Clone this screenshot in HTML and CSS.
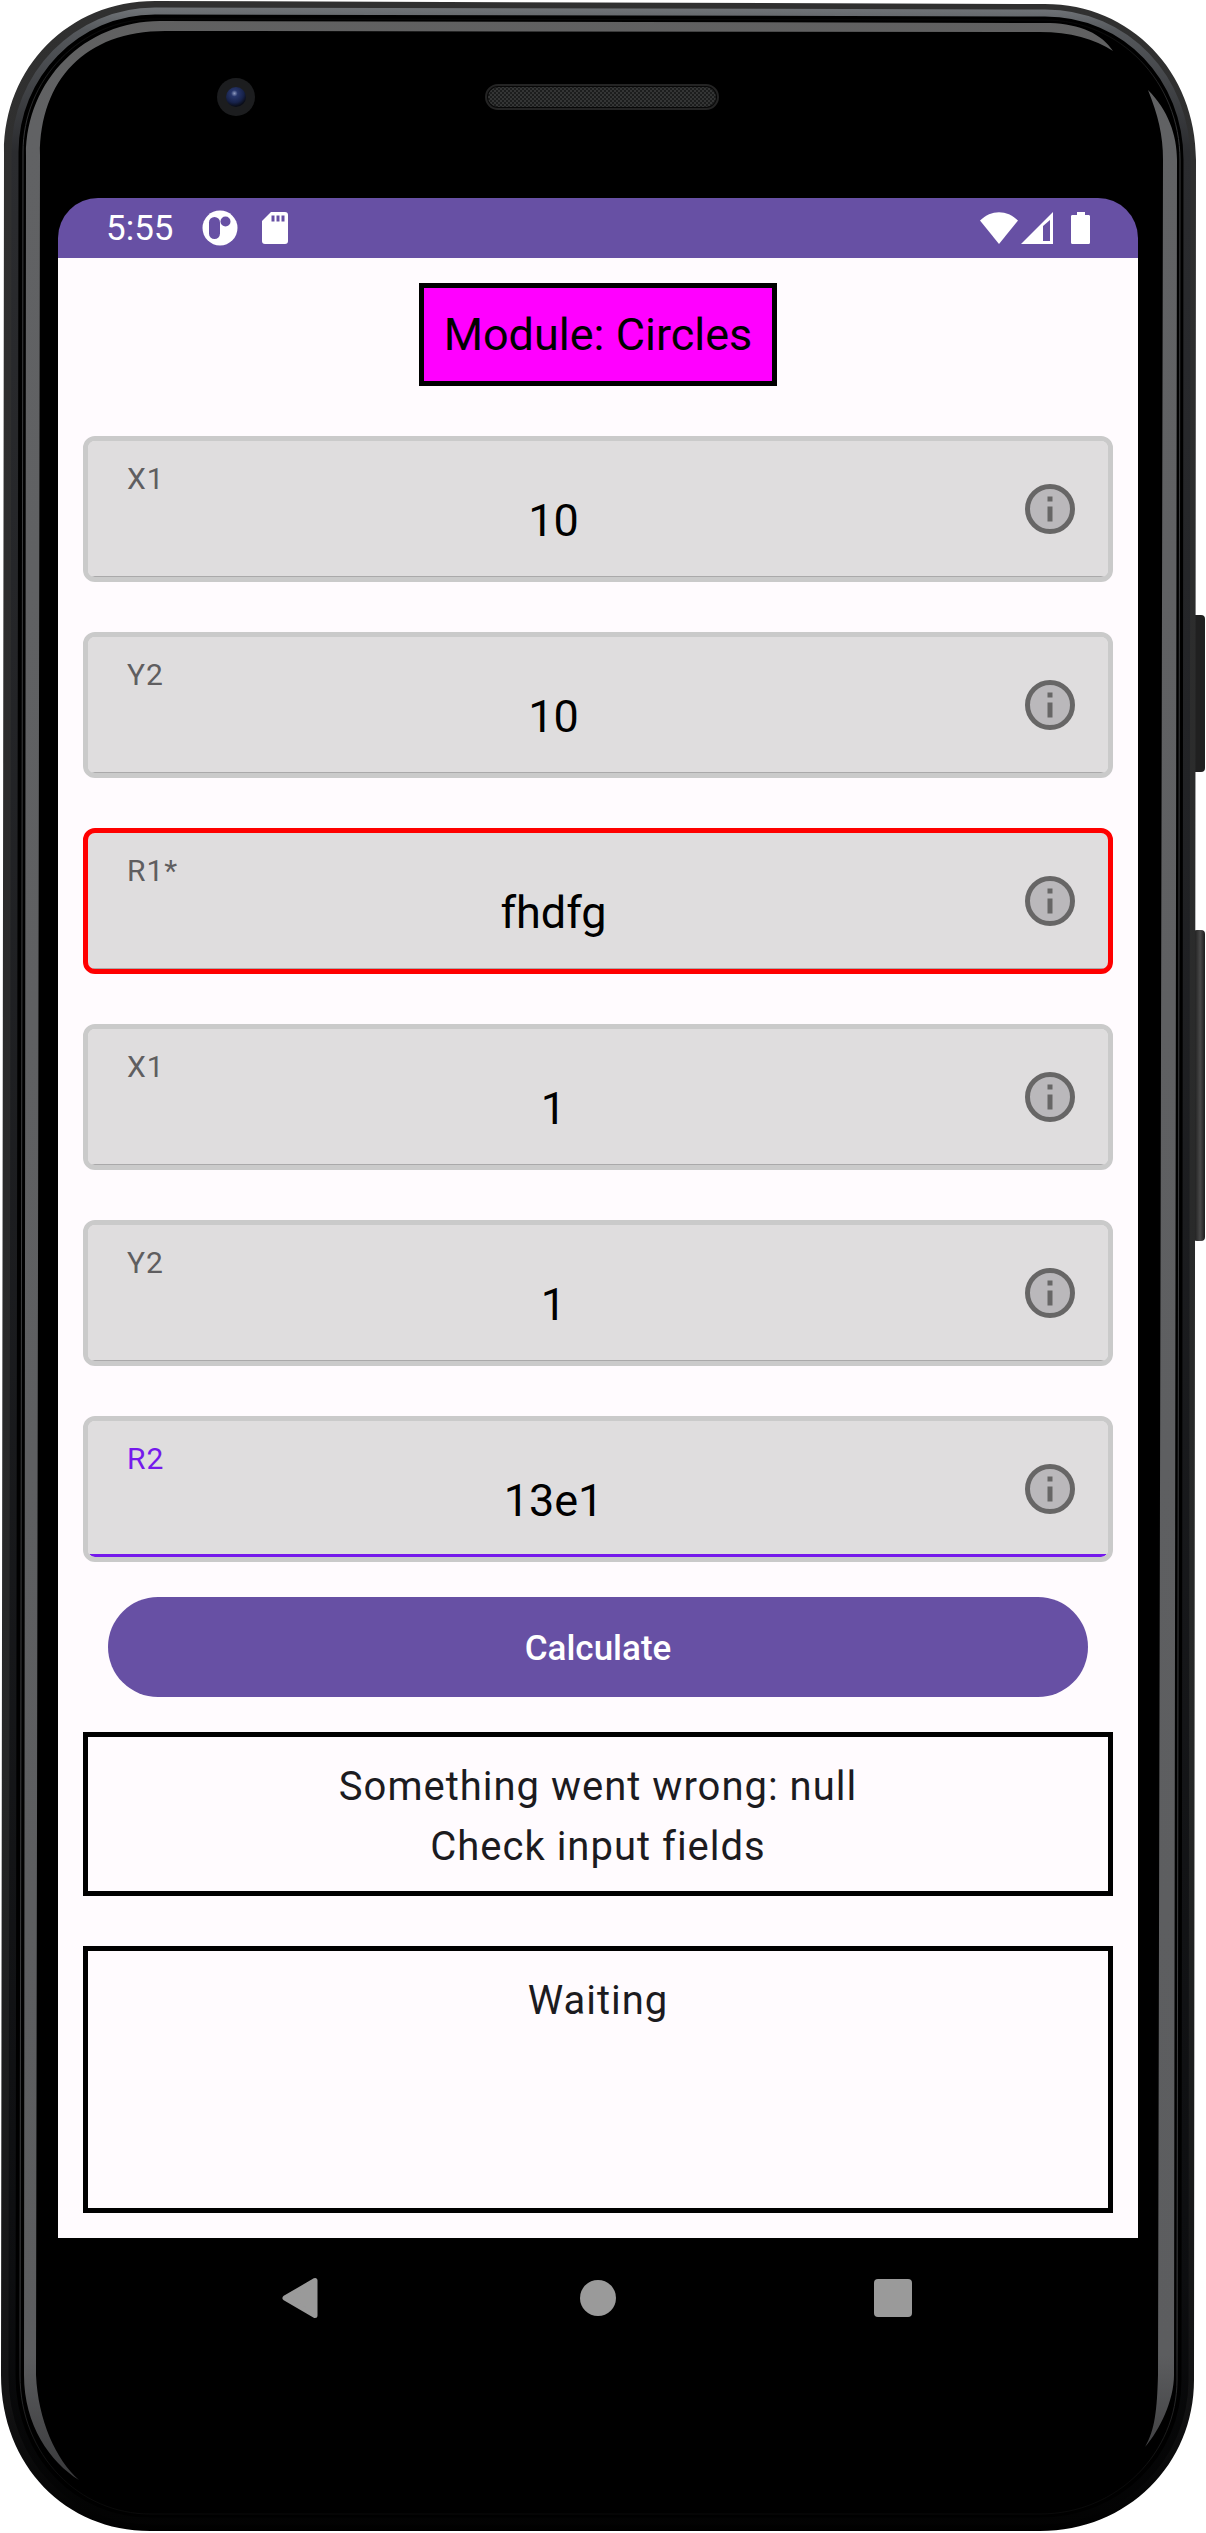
FILE: index.html
```html
<!DOCTYPE html>
<html lang="en">
<head>
<meta charset="utf-8">
<meta name="viewport" content="width=device-width, initial-scale=1">
<title>Module: Circles</title>
<link rel="stylesheet" href="styles.css">
</head>
<body>
<svg class="defs" aria-hidden="true">
  <symbol id="info" viewBox="0 0 50 50">
    <circle cx="25" cy="25" r="22.5" fill="#bab8bb" stroke="#676666" stroke-width="5"/>
    <path d="M22.5 12.5h5v5h-5zM22.5 22.5h5v15h-5z" fill="#676666"/>
  </symbol>
</svg>
<div class="phone">
  <svg class="frame" viewBox="0 0 1206 2533" preserveAspectRatio="none" aria-hidden="true">
    <defs>
      <linearGradient id="rim" x1="0" y1="0" x2="0" y2="1">
        <stop offset="0" stop-color="#303030"/><stop offset=".7" stop-color="#262727"/>
        <stop offset=".95" stop-color="#121213"/><stop offset="1" stop-color="#000"/>
      </linearGradient>
      <linearGradient id="metal" gradientUnits="userSpaceOnUse" x1="0" y1="0" x2="0" y2="2533">
        <stop offset="0" stop-color="#7a7e82"/><stop offset=".012" stop-color="#55585c"/>
        <stop offset=".06" stop-color="#2b2c2f"/><stop offset=".9" stop-color="#0d0e10"/>
        <stop offset="1" stop-color="#020202"/>
      </linearGradient>
      <linearGradient id="hair" gradientUnits="userSpaceOnUse" x1="0" y1="0" x2="0" y2="2533">
        <stop offset="0" stop-color="#000"/><stop offset=".06" stop-color="#3c3d3f"/>
        <stop offset=".92" stop-color="#3c3d3f"/><stop offset=".98" stop-color="#0a0a0a"/>
      </linearGradient>
      <linearGradient id="shine" gradientUnits="userSpaceOnUse" x1="0" y1="0" x2="0" y2="2533">
        <stop offset="0" stop-color="#606060"/><stop offset=".05" stop-color="#616264"/>
        <stop offset=".93" stop-color="#5c5d5f"/><stop offset="1" stop-color="#2a2a2c"/>
      </linearGradient>
      <linearGradient id="key" x1="0" y1="0" x2="1" y2="0">
        <stop offset="0" stop-color="#151515"/><stop offset=".6" stop-color="#484848"/><stop offset="1" stop-color="#1c1c1c"/>
      </linearGradient>
      <radialGradient id="lens" cx=".42" cy=".32" r=".65">
        <stop offset="0" stop-color="#8f9bc0"/><stop offset=".25" stop-color="#27366b"/>
        <stop offset=".7" stop-color="#17224a"/><stop offset="1" stop-color="#0a0d18"/>
      </radialGradient>
      <pattern id="mesh" width="4" height="4" patternUnits="userSpaceOnUse">
        <rect width="4" height="4" fill="#1c1d1d"/>
        <circle cx="1" cy="1" r="1" fill="#3b3c3c"/><circle cx="3" cy="3" r="1" fill="#3b3c3c"/>
      </pattern>
    </defs>
    <rect x="1190" y="615" width="15" height="157" rx="4" fill="#202020"/>
    <rect x="1193" y="930" width="12" height="311" rx="4" fill="url(#key)"/>
    <path fill="url(#rim)" d="M4 152C4 68 68 1 155 1L1045 4C1131 4 1196 72 1196 160L1194 2380C1194 2464 1128 2531 1040 2531L150 2531C66 2531 1 2466 1 2375Z"/>
    <path fill="#000" stroke="url(#metal)" stroke-width="7" d="M15 152C15 76 76 11 155 11L1045 13C1126 13 1187 78 1187 160L1185 2380C1185 2458 1122 2521 1040 2521L150 2521C74 2521 12 2460 12 2375Z"/>
    <path fill="#000" stroke="url(#hair)" stroke-width="1" d="M23 152C23 80 80 19 155 19L1045 20C1120 20 1180 82 1180 160L1177 2380C1177 2452 1118 2514 1040 2514L150 2514C80 2514 20 2456 20 2375Z"/>
    <path fill="url(#shine)" d="M79 2480C50 2462 24 2425 24 2375L26 155C26 80 85 21 160 21L1050 23C1080 24 1102 34 1113 51C1095 39 1070 32 1040 32L165 31C85 31 40 80 40 155L36 2375C38 2420 56 2460 79 2480Z"/>
    <path fill="url(#shine)" d="M1148 90C1168 110 1177 135 1177 160L1174 2375C1174 2400 1160 2430 1145 2447C1155 2430 1157 2410 1158 2375L1163 160C1163 135 1158 115 1148 90Z"/>
    <circle cx="236" cy="97" r="19" fill="#1c1d1f"/>
    <circle cx="236" cy="97" r="10" fill="url(#lens)"/>
    <rect x="486" y="85" width="232" height="24" rx="12" fill="#080808" stroke="#242424" stroke-width="2"/>
    <rect x="488" y="87" width="228" height="20" rx="10" fill="url(#mesh)"/>
  </svg>

  <div class="screen">
    <header class="status">
      <span class="time">5:55</span>
      <svg class="logo" viewBox="0 0 36 36" aria-hidden="true">
        <circle cx="18" cy="18" r="17.5" fill="#fff"/>
        <rect x="7" y="7" width="11" height="22" rx="5.5" fill="#6750a4"/>
        <circle cx="23.500" cy="11.500" r="5" fill="#6750a4"/>
      </svg>
      <svg class="card" viewBox="0 0 26 32" aria-hidden="true">
        <path fill="#fff" d="M9 0H23a3 3 0 0 1 3 3V29a3 3 0 0 1-3 3H3a3 3 0 0 1-3-3V9Z"/>
        <path fill="#6750a4" d="M9.500 3.500h3v6h-3zM14.500 3.500h3v6h-3zM19.500 3.500h3v6h-3z"/>
      </svg>
      <svg class="signals" viewBox="0 0 110 32" aria-hidden="true">
        <path fill="#fff" d="M0 8.500C11-2.600 27-2.600 38 8.500L19 32Z"/>
        <path fill="#fff" fill-rule="evenodd" d="M41 32L73 0V32ZM63 14V29H70V8Z"/>
        <path fill="#fff" d="M93 3h4V0h8v3h4a1.500 1.500 0 0 1 1 1.500V30.500a1.500 1.500 0 0 1-1.500 1.500h-16a1.500 1.500 0 0 1-1.500-1.500V4.500a1.500 1.500 0 0 1 1-1.500Z"/>
      </svg>
    </header>

    <main class="content">
      <h1 class="title">Module: Circles</h1>
      <form class="form">
        <div class="field">
          <div class="entry"><label class="label" for="x1">X1</label><input class="value" id="x1" type="text" value="10"></div>
          <button class="info" type="button" aria-label="About X1"><svg class="glyph"><use href="#info"/></svg></button>
        </div>
        <div class="field">
          <div class="entry"><label class="label" for="y1">Y2</label><input class="value" id="y1" type="text" value="10"></div>
          <button class="info" type="button" aria-label="About Y2"><svg class="glyph"><use href="#info"/></svg></button>
        </div>
        <div class="field field-error">
          <div class="entry"><label class="label" for="r1">R1*</label><input class="value" id="r1" type="text" value="fhdfg" aria-invalid="true" spellcheck="false"></div>
          <button class="info" type="button" aria-label="About R1"><svg class="glyph"><use href="#info"/></svg></button>
        </div>
        <div class="field">
          <div class="entry"><label class="label" for="x2">X1</label><input class="value" id="x2" type="text" value="1"></div>
          <button class="info" type="button" aria-label="About X1"><svg class="glyph"><use href="#info"/></svg></button>
        </div>
        <div class="field">
          <div class="entry"><label class="label" for="y2">Y2</label><input class="value" id="y2" type="text" value="1"></div>
          <button class="info" type="button" aria-label="About Y2"><svg class="glyph"><use href="#info"/></svg></button>
        </div>
        <div class="field field-active">
          <div class="entry"><label class="label" for="r2">R2</label><input class="value" id="r2" type="text" value="13e1" spellcheck="false"></div>
          <button class="info" type="button" aria-label="About R2"><svg class="glyph"><use href="#info"/></svg></button>
        </div>
        <button class="submit" type="submit">Calculate</button>
      </form>
      <p class="message">Something went wrong: null<br>Check input fields</p>
      <p class="message message-result">Waiting</p>
    </main>

    <nav class="nav" aria-label="System">
      <button class="key" type="button" aria-label="Back"><svg class="glyph" viewBox="0 0 50 50"><path fill="#9a9a9a" stroke="#9a9a9a" stroke-width="5" stroke-linejoin="round" d="M8 25L38 7.500V42.500Z"/></svg></button>
      <button class="key" type="button" aria-label="Home"><svg class="glyph" viewBox="0 0 50 50"><circle cx="25" cy="25" r="18" fill="#9a9a9a"/></svg></button>
      <button class="key" type="button" aria-label="Recents"><svg class="glyph" viewBox="0 0 50 50"><rect x="5" y="6" width="38" height="38" rx="4" fill="#9a9a9a"/></svg></button>
    </nav>
  </div>
</div>
</body>
</html>
```
FILE: styles.css
```css
* {
  box-sizing: border-box;
}

body {
  margin: 0;
  background: #fff;
  color: #1c1b1f;
  font-family: Roboto, "Liberation Sans", sans-serif;
}

button,
input {
  margin: 0;
  border: 0;
  padding: 0;
  background: none;
  color: inherit;
  font: inherit;
}

.defs {
  display: none;
}

.phone {
  position: relative;
  padding: 198px 68px 175px 58px;
}

.frame {
  position: absolute;
  inset: 0;
  width: 100%;
  height: 100%;
}

/* Screen */
.screen {
  position: relative;
  overflow: hidden;
  border-radius: 40px;
  background: #000;
}

.status {
  display: flex;
  align-items: center;
  height: 60px;
  padding: 0 48px;
  background: #6750a4;
  color: #fff;
}

.time {
  margin-right: 28px;
  padding-top: 2px;
  font-size: 35px;
  line-height: 58px;
}

.logo {
  width: 36px;
  height: 36px;
  margin-right: 24px;
}

.card {
  width: 26px;
  height: 32px;
}

.signals {
  width: 110px;
  height: 32px;
  margin-left: auto;
}

.content {
  display: flex;
  flex-direction: column;
  padding: 25px;
  background: #fffbfe;
}

.title {
  align-self: center;
  margin: 0 0 50px;
  border: 5px solid #000;
  padding: 20px;
  background: #f0f;
  color: #000;
  font-size: 45px;
  font-weight: 400;
  line-height: 53px;
}

/* Form */
.form {
  display: flex;
  flex-direction: column;
  gap: 50px;
}

.field {
  display: flex;
  align-items: center;
  gap: 45px;
  border: 5px solid #cacaca;
  border-radius: 12px;
  padding-right: 33px;
  padding-left: 39px;
  background: linear-gradient(#aaa9aa, #aaa9aa) bottom / 100% 1px no-repeat padding-box #dfddde;
}

.field-error {
  border-color: #f00;
}

.field-active {
  background: linear-gradient(#7519ec, #7519ec) bottom / 100% 3px no-repeat padding-box #dfddde;
}

.entry {
  display: flex;
  flex: 1;
  flex-direction: column;
  padding: 23px 0 30px;
}

.label {
  color: #5f5e60;
  font-size: 30px;
  letter-spacing: 1px;
  line-height: 30px;
}

.field-active .label {
  color: #7519ec;
}

.value {
  width: 100%;
  height: 53px;
  outline: 0;
  color: #000;
  font-size: 45px;
  line-height: 53px;
  text-align: center;
}

.info,
.key {
  width: 50px;
  height: 50px;
  cursor: pointer;
}

.glyph {
  display: block;
  width: 50px;
  height: 50px;
}

.submit {
  height: 100px;
  margin: -15px 25px 35px;
  border-radius: 50px;
  padding-top: 3px;
  background: #6750a4;
  color: #fff;
  font-size: 35px;
  font-weight: 500;
  cursor: pointer;
}

/* Output */
.message {
  margin: 0;
  border: 5px solid #000;
  padding: 20px 20px 14px;
  font-size: 40px;
  letter-spacing: 1px;
  line-height: 60px;
  text-align: center;
}

.message-result {
  min-height: 267px;
  margin-top: 50px;
}

/* System navigation */
.nav {
  display: flex;
  align-items: center;
  justify-content: center;
  gap: 246px;
  height: 120px;
}
```
